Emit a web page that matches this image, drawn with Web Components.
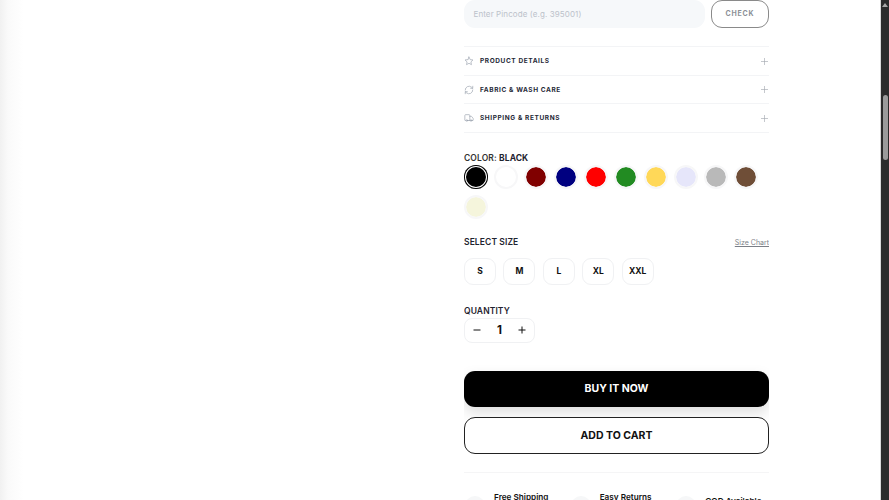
<!DOCTYPE html>
<html lang="en"><head><meta charset="utf-8"><title>Product</title>
<style>
html,body{margin:0;padding:0;height:500px;overflow:hidden;background:#fff}
body{font-family:Inter,"Liberation Sans",sans-serif}
</style></head><body>
<product-page>
  <pin-check></pin-check>
  <accordion-list>
    <accordion-row label="PRODUCT DETAILS" icon="star" h="29"></accordion-row>
    <accordion-row label="FABRIC &amp; WASH CARE" icon="refresh" h="28"></accordion-row>
    <accordion-row label="SHIPPING &amp; RETURNS" icon="truck" h="29"></accordion-row>
  </accordion-list>
  <color-picker></color-picker>
  <size-picker></size-picker>
  <qty-stepper></qty-stepper>
  <action-button kind="buy">BUY IT NOW</action-button>
  <action-button kind="cart">ADD TO CART</action-button>
  <feature-strip></feature-strip>
</product-page>
<script>
const def=(n,html)=>customElements.define(n,class extends HTMLElement{
  constructor(){super();this.attachShadow({mode:'open'}).innerHTML=typeof html==='function'?html(this):html}
});
const icons={
 star:'<path d="M12 2.5l2.9 6.2 6.6.8-4.9 4.6 1.3 6.7L12 17.5l-5.9 3.3 1.3-6.7-4.9-4.6 6.6-.8z"/>',
 refresh:'<path d="M3 12a9 9 0 0 1 15-6.7L21 8"/><path d="M21 3v5h-5"/><path d="M21 12a9 9 0 0 1-15 6.7L3 16"/><path d="M8 16H3v5"/>',
 truck:'<path d="M14 18V6a2 2 0 0 0-2-2H4a2 2 0 0 0-2 2v11a1 1 0 0 0 1 1h2"/><path d="M15 18H9"/><path d="M19 18h2a1 1 0 0 0 1-1v-3.65a1 1 0 0 0-.22-.62l-3.48-4.35A1 1 0 0 0 17.52 8H14"/><circle cx="17" cy="18" r="2"/><circle cx="7" cy="18" r="2"/>'
};
def('product-page',`<style>
:host{display:grid;grid-template-columns:464px 305px 1fr 9px;height:500px;overflow:hidden;background:#fff}
.media{background:linear-gradient(90deg,#f1f1f1 0,#fafafa 8px,#fff 24px)}
.col{display:flex;flex-direction:column;min-width:0;height:500px;overflow:hidden}
</style><div class="media"></div><div class="col"><slot></slot></div><div></div><page-scrollbar></page-scrollbar>`);
def('page-scrollbar',`<style>
:host{display:flex;flex-direction:column;align-items:center;background:#2b2b2b;border-left:1px solid #d8d8d8;box-sizing:border-box;height:500px}
.up{width:0;height:0;border:3px solid transparent;border-top:0;border-bottom:4px solid #a8a8a8;margin-top:3px}
.thumb{width:5px;height:65px;margin-top:88px;border-radius:3px;background:#9b9b9b}
</style><div class="up"></div><div class="thumb"></div>`);
def('pin-check',`<style>
:host{display:flex;gap:6px;height:28px;flex:none}
.in{flex:1;background:#f6f8fa;border-radius:11px;font-size:8px;color:#bcc2ca;padding:0 9.5px;display:flex;align-items:center;box-sizing:border-box;letter-spacing:.1px}
.btn{width:58px;box-sizing:border-box;height:27.5px;border:1.5px solid #8a8a8a;border-radius:11px;font-size:7px;font-weight:700;letter-spacing:.8px;color:#8b8f96;display:flex;align-items:center;justify-content:center}
</style><div class="in">Enter Pincode (e.g. 395001)</div><div class="btn">CHECK</div>`);
def('accordion-list',`<style>:host{display:flex;flex-direction:column;margin-top:18px;border-top:1px solid #f3f4f6;flex:none}</style><slot></slot>`);
def('accordion-row',h=>`<style>
:host{display:flex;align-items:center;height:${h.getAttribute('h')}px;box-sizing:border-box;border-bottom:1px solid #f3f4f6;color:#1f2937;padding-right:1px}
svg{width:10px;height:10px;fill:none;stroke:#9ca3af;stroke-width:1.6;stroke-linecap:round;stroke-linejoin:round;flex:none}
span{font-size:6.5px;font-weight:700;letter-spacing:.6px;margin-left:6px;flex:1}
svg.p{width:7px;height:7px;stroke-width:.9;stroke:#a3a8b0}
</style><svg viewBox="0 0 24 24">${icons[h.getAttribute('icon')]}</svg><span>${h.getAttribute('label').replace(/&/g,'&amp;')}</span>
<svg class="p" viewBox="0 0 10 10"><path d="M5 .5v9M.5 5h9"/></svg>`);
const cols=['#000','#fff','#800000','#000080','#ff0000','#228b22','#ffd858','#e6e6fa','#b9b9b9','#6f4e37','#f5f5dc'];
def('color-picker',`<style>
:host{display:block;margin-top:19.5px;flex:none}
.l{font-size:8.5px;font-weight:600;letter-spacing:.1px;color:#333;line-height:11px}
b{font-weight:700;color:#1f2430}
.g{display:flex;flex-wrap:wrap;gap:6px;margin-top:1px;margin-left:-.5px}
i{display:block;width:24px;height:24px;box-sizing:border-box;border-radius:50%;border:2px solid #f7f7f8;background-clip:padding-box}
i.on{border:none;box-shadow:inset 0 0 0 1px #000,inset 0 0 0 2px #fff}
</style><div class="l">COLOR: <b>BLACK</b></div><div class="g">${cols.map((c,i)=>`<i class="${i?'':'on'}" style="background-color:${c}"></i>`).join('')}</div>`);
def('size-picker',`<style>
:host{display:block;margin-top:18px;flex:none}
.h{display:flex;justify-content:space-between;align-items:center;height:11px}
.t{font-size:8.5px;font-weight:600;letter-spacing:.1px;color:#1f2430}
a{font-size:7px;color:#7b7f87;text-decoration:underline}
.g{display:flex;gap:7.4px;margin-top:10px}
.s{width:32px;height:27.5px;box-sizing:border-box;border:1px solid #f0f1f3;border-radius:9px;font-size:8.5px;font-weight:700;color:#111;display:flex;align-items:center;justify-content:center}
</style><div class="h"><span class="t">SELECT SIZE</span><a>Size Chart</a></div>
<div class="g"><span class="s">S</span><span class="s">M</span><span class="s">L</span><span class="s">XL</span><span class="s">XXL</span></div>`);
def('qty-stepper',`<style>
:host{display:block;margin-top:21px;flex:none}
.l{font-size:8.5px;font-weight:600;letter-spacing:.1px;color:#1f2430;line-height:11px}
.b{display:flex;align-items:center;justify-content:space-between;width:71px;height:24.5px;box-sizing:border-box;border:1px solid #f0f1f3;border-radius:8px;margin-top:1px;padding:0 8px;color:#111;font-weight:700}
.n{font-size:11.5px}
svg{width:8px;height:8px;stroke:#111;stroke-width:1;fill:none}
</style><div class="l">QUANTITY</div><div class="b"><svg viewBox="0 0 8 8"><path d="M.5 4h7"/></svg><span class="n">1</span><svg viewBox="0 0 8 8"><path d="M.5 4h7M4 .5v7"/></svg></div>`);
def('action-button',h=>{const buy=h.getAttribute('kind')==='buy';return `<style>
:host{display:flex;align-items:center;justify-content:center;flex:none;box-sizing:border-box;border-radius:11px;font-size:10.5px;font-weight:700;
${buy?'height:36px;margin-top:28px;background:#000;color:#fff;box-shadow:0 6px 14px rgba(0,0,0,.13)':'height:37px;margin-top:10px;background:#fff;color:#111;border:1.5px solid #222'}}
</style><slot></slot>`});
def('feature-strip',`<style>
:host{display:grid;grid-template-columns:repeat(3,1fr);margin-top:18px;border-top:1px solid #f5f5f6;padding-top:20px;flex:none;gap:12px;height:40px;box-sizing:content-box}
div{display:flex;align-items:flex-start;gap:9px;font-size:8.2px;font-weight:600;color:#111;line-height:11px;margin-left:1px}
i{width:20px;height:20px;border-radius:50%;background:#f6f7f8;flex:none;margin-top:3px}
span{margin-top:-1px;white-space:nowrap}
.c{margin-top:3px}
</style><div><i></i><span>Free Shipping</span></div><div><i></i><span>Easy Returns</span></div><div><i></i><span class="c">COD Available</span></div>`);
</script>
</body></html>
